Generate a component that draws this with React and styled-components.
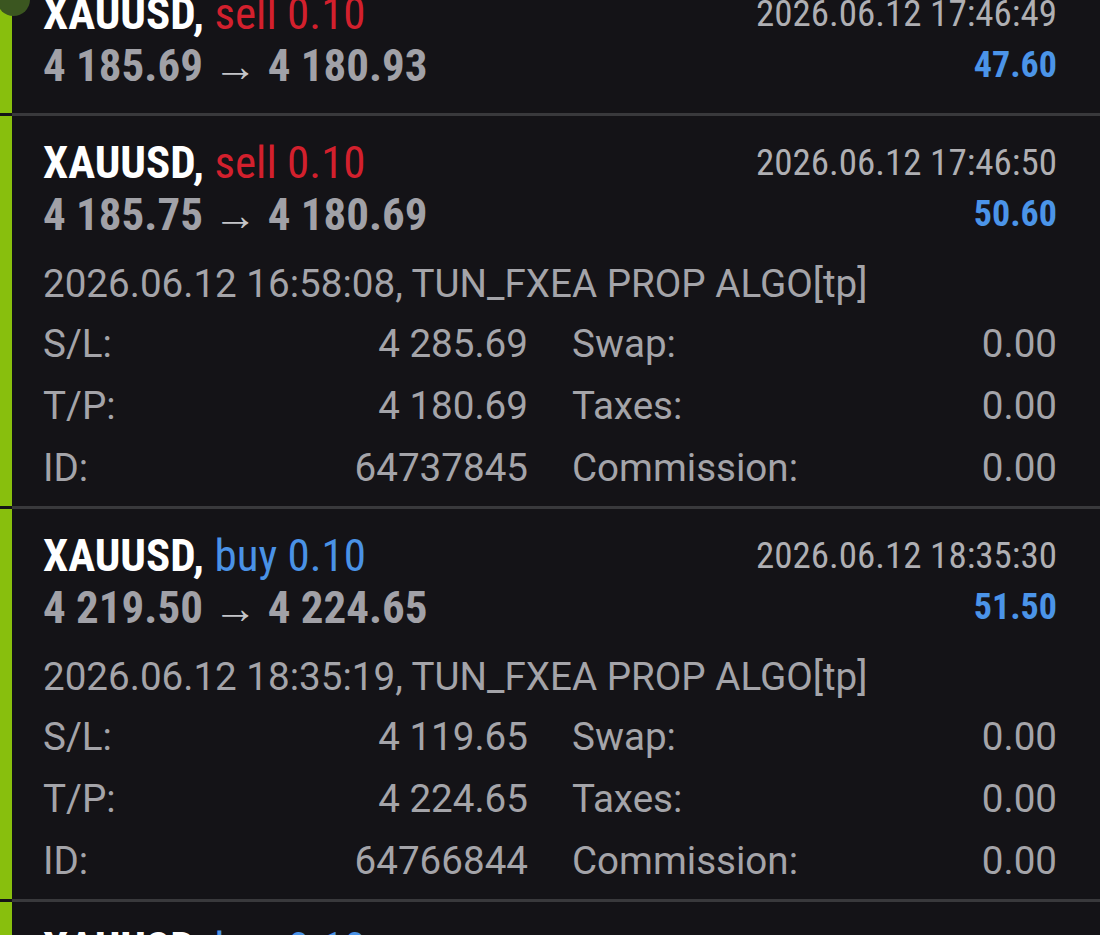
import styled, { createGlobalStyle } from "styled-components"

const GlobalStyle = createGlobalStyle`
  html, body {
    margin: 0;
    padding: 0;
    background: #141317;
    overflow: hidden;
  }
  body {
    font-family: "Roboto", sans-serif;
    -webkit-font-smoothing: antialiased;
  }
`

const condensed = `"Roboto Condensed", "Liberation Sans Narrow", "Roboto", sans-serif`

const deals = [
  {
    id: "64737844",
    side: "sell",
    open: "4 185.69",
    close: "4 180.93",
    time: "2026.06.12 17:46:49",
    profit: "47.60",
  },
  {
    id: "64737845",
    side: "sell",
    open: "4 185.75",
    close: "4 180.69",
    time: "2026.06.12 17:46:50",
    profit: "50.60",
    opened: "2026.06.12 16:58:08",
    sl: "4 285.69",
    tp: "4 180.69",
  },
  {
    id: "64766844",
    side: "buy",
    open: "4 219.50",
    close: "4 224.65",
    time: "2026.06.12 18:35:30",
    profit: "51.50",
    opened: "2026.06.12 18:35:19",
    sl: "4 119.65",
    tp: "4 224.65",
  },
  {
    id: "64766845",
    side: "buy",
    open: "4 219.62",
    close: "4 224.65",
    time: "2026.06.12 18:35:31",
    profit: "50.30",
  },
]

const Deal = ({ deal }) => (
  <Item>
    <Bar />
    <Body>
      <Header>
        <div>
          <Title>
            XAUUSD, <Side $buy={deal.side === "buy"}>{deal.side} 0.10</Side>
          </Title>
          <Prices>
            {deal.open} <Arrow>→</Arrow> {deal.close}
          </Prices>
        </div>
        <Right>
          <Time>{deal.time}</Time>
          <Profit>{deal.profit}</Profit>
        </Right>
      </Header>

      {deal.opened && (
        <>
          <Comment>{deal.opened}, TUN_FXEA PROP ALGO[tp]</Comment>
          <Details>
            <Pair><span>S/L:</span><span>{deal.sl}</span></Pair>
            <Pair><span>Swap:</span><span>0.00</span></Pair>
            <Pair><span>T/P:</span><span>{deal.tp}</span></Pair>
            <Pair><span>Taxes:</span><span>0.00</span></Pair>
            <Pair><span>ID:</span><span>{deal.id}</span></Pair>
            <Pair><span>Commission:</span><span>0.00</span></Pair>
          </Details>
        </>
      )}
    </Body>
  </Item>
)

const App = () => (
  <>
    <GlobalStyle />
    <Screen>
      <ScrollDot />
      <List>
        {deals.map((deal) => (
          <Deal key={deal.id} deal={deal} />
        ))}
      </List>
    </Screen>
  </>
)

export default App

const Screen = styled.div`
  position: relative;
  height: 935px;
  overflow: hidden;
`

const ScrollDot = styled.div`
  position: absolute;
  left: -3px;
  top: -17px;
  width: 33px;
  height: 33px;
  border-radius: 50%;
  background: #3b5620;
  z-index: 2;
`

const List = styled.div`
  margin-top: -33px;
`

const Item = styled.div`
  display: flex;
`

const Bar = styled.div`
  width: 12px;
  flex-shrink: 0;
  margin-bottom: 3px;
  background: #88bf0d;
`

const Body = styled.div`
  flex: 1;
  padding: 22px 43px 20px 31px;
  border-bottom: 3px solid #39393c;
`

const Header = styled.div`
  display: grid;
  grid-template-columns: 1fr auto;
`

const Title = styled.div`
  font-family: ${condensed};
  font-size: 45px;
  font-weight: 700;
  line-height: 50px;
  color: #ffffff;
  white-space: nowrap;
`

const Side = styled.span`
  font-weight: 400;
  color: ${(p) => (p.$buy ? "#4a92e6" : "#d3202d")};
`

const Prices = styled.div`
  font-family: ${condensed};
  font-size: 45px;
  font-weight: 700;
  line-height: 53px;
  color: #a1a1a7;
  white-space: nowrap;
`

const Arrow = styled.span`
  font-weight: 400;
  font-size: 44px;
  color: #c4c4c8;
`

const Right = styled.div`
  text-align: right;
`

const Time = styled.div`
  font-family: ${condensed};
  font-size: 37px;
  line-height: 50px;
  color: #afafb3;
`

const Profit = styled.div`
  font-family: ${condensed};
  font-size: 36px;
  font-weight: 700;
  line-height: 53px;
  color: #4b94e8;
`

const Comment = styled.div`
  margin-top: 13px;
  font-size: 38.6px;
  line-height: 58px;
  color: #a4a4a9;
  white-space: nowrap;
`

const Details = styled.div`
  display: grid;
  grid-template-columns: 1fr 1fr;
  column-gap: 44px;
  margin-bottom: -13px;
`

const Pair = styled.div`
  display: flex;
  justify-content: space-between;
  font-size: 38.6px;
  line-height: 62px;
  color: #a4a4a9;
`
